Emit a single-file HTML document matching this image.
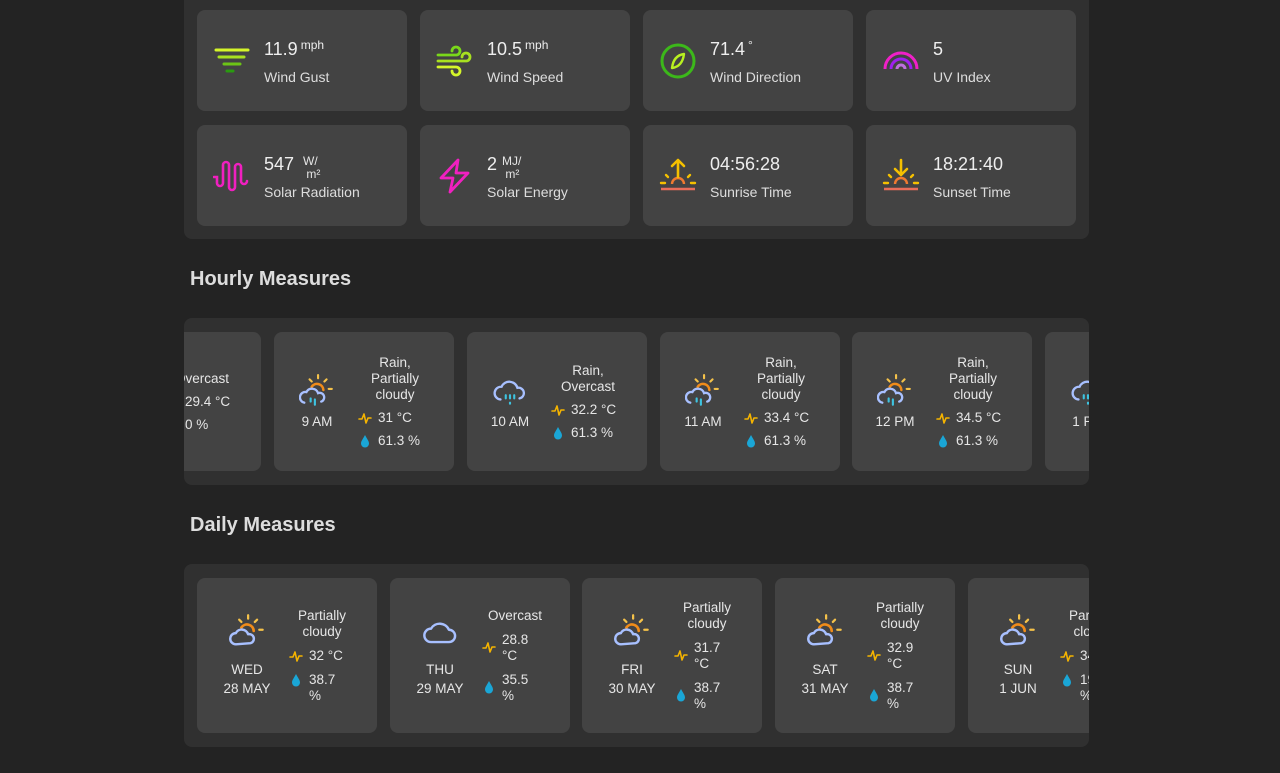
<!DOCTYPE html>
<html><head><meta charset="utf-8"><style>
*{box-sizing:border-box;margin:0;padding:0}
body{width:1280px;height:773px;background:#232323;font-family:"Liberation Sans",sans-serif;color:#e6e6e6;position:relative;overflow:hidden}
.panel{position:absolute;left:184px;width:905px;background:#303030;border-radius:8px;overflow:hidden}
.card{position:absolute;background:#434343;border-radius:8px}
.tc{width:210px;height:101px}
.tc svg{position:absolute;left:16px;top:32px;width:38px;height:38px}
.tc .v{position:absolute;left:67px;top:29px;font-size:18px;color:#eee}
.tc .v sup{font-size:12px;vertical-align:top;position:relative;top:-1px;margin-left:3px}
.tc .l{position:absolute;left:67px;top:59px;font-size:14px;color:#ddd}
.unit2{position:absolute;font-size:12px;line-height:13px}
h2{position:absolute;left:190px;font-size:20px;font-weight:bold;color:#ddd}
.hc{top:14px;width:180px;height:139px;display:flex;align-items:center;font-size:13.5px;line-height:16px}
.lc{width:86px;display:flex;flex-direction:column;align-items:center;flex:none}
.lc svg{width:36px;height:36px;margin-bottom:5px}
.rc{width:82px;margin-left:-6px;text-align:center;flex:none}
.row{display:flex;align-items:flex-start;text-align:left;margin-top:7px;padding-left:4px}
.row svg{width:14px;height:14px;margin-right:6px;margin-top:1px;flex:none}
.dc{top:14px;width:180px;height:155px;display:flex;align-items:center;font-size:13.5px;line-height:16px}
.dc .lc{width:100px}
.dc .lc svg{margin-bottom:9px;width:38px;height:38px}
.dc .lc div{line-height:19px}
.dc .rc{width:66px;margin-left:-8px}
.dc .row{padding-left:0;margin-top:8px}
.dc .row span{width:40px}
</style></head><body>
<svg width="0" height="0" style="position:absolute">
<defs>
<symbol id="pc" viewBox="0 0 34 34">
<g stroke="#f5c24a" stroke-width="2" stroke-linecap="round" fill="none">
<line x1="18" y1="2" x2="18" y2="5"/><line x1="10" y1="6" x2="12" y2="8"/><line x1="26" y1="6" x2="24" y2="8"/><line x1="28" y1="15" x2="31" y2="15"/></g>
<path d="M12 13a6 6 0 0 1 11 3" stroke="#f08c1a" stroke-width="2.4" fill="none" stroke-linecap="round"/>
<path d="M7 28a5 5 0 0 1 0-10a6 6 0 0 1 11 1a4 4 0 0 1 2 8z" stroke="#a8c0ff" stroke-width="2.2" fill="none" stroke-linejoin="round"/>
</symbol>
<symbol id="pcr" viewBox="0 0 34 34">
<g stroke="#f5c24a" stroke-width="2" stroke-linecap="round" fill="none">
<line x1="18" y1="2" x2="18" y2="5"/><line x1="10" y1="6" x2="12" y2="8"/><line x1="26" y1="6" x2="24" y2="8"/><line x1="28" y1="15" x2="31" y2="15"/></g>
<path d="M12 13a6 6 0 0 1 11 3" stroke="#f08c1a" stroke-width="2.4" fill="none" stroke-linecap="round"/>
<path d="M5 28a5 5 0 0 1 2-10a6 6 0 0 1 11 1a4 4 0 0 1 3 8" stroke="#a8c0ff" stroke-width="2.2" fill="none" stroke-linecap="round"/>
<g stroke="#3ec3e0" stroke-width="2" stroke-linecap="round"><line x1="11" y1="24" x2="11" y2="27"/><line x1="15" y1="25" x2="15" y2="30"/></g>
</symbol>
<symbol id="rc" viewBox="0 0 34 34">
<path d="M8 25a6 6 0 0 1 1-12a8 8 0 0 1 15 1a5 5 0 0 1 2 10" stroke="#a8c0ff" stroke-width="2.2" fill="none" stroke-linecap="round"/>
<g stroke="#3ec3e0" stroke-width="2" stroke-linecap="round"><line x1="13" y1="21" x2="13" y2="24"/><line x1="17" y1="21" x2="17" y2="24"/><line x1="21" y1="21" x2="21" y2="24"/><line x1="17" y1="28" x2="17" y2="29"/></g>
</symbol>
<symbol id="oc" viewBox="0 0 34 34">
<path d="M9 26a6 6 0 0 1 0-12a9 9 0 0 1 16 1a5.5 5.5 0 0 1 0 11z" stroke="#a8c0ff" stroke-width="2.2" fill="none" stroke-linejoin="round"/>
</symbol>
<symbol id="tp" viewBox="0 0 14 14"><path d="M1 8h3l2-5 2 9 2-5h3" stroke="#f5b400" stroke-width="1.6" fill="none" stroke-linejoin="round" stroke-linecap="round"/></symbol>
<symbol id="dr" viewBox="0 0 14 14"><path d="M7 1C5 5 3 7 3 9.5a4 4 0 0 0 8 0C11 7 9 5 7 1z" fill="#1aa6d6"/></symbol>
<symbol id="sun" viewBox="0 0 38 38">
<g stroke="#f5c000" stroke-width="2.4" stroke-linecap="round" fill="none"><line x1="2" y1="26" x2="6" y2="26"/><line x1="32" y1="26" x2="36" y2="26"/><line x1="7" y1="18" x2="9" y2="20"/><line x1="31" y1="18" x2="29" y2="20"/></g>
<path d="M13 27a6 6 0 0 1 12 0" stroke="#f07a30" stroke-width="2.4" fill="none"/>
<line x1="2" y1="32" x2="36" y2="32" stroke="#e86d5a" stroke-width="2.4"/>
</symbol>
</defs></svg>

<div class="panel" style="top:-10px;height:249px">
<div class="card tc" style="left:13px;top:20px"><svg viewBox="0 0 38 38"><g stroke-linecap="round" stroke-width="3"><line x1="3" y1="8" x2="35" y2="8" stroke="#d4f52a"/><line x1="6" y1="15" x2="31" y2="15" stroke="#a8e020"/><line x1="11" y1="22" x2="27" y2="22" stroke="#6cc416"/><line x1="14" y1="29" x2="20" y2="29" stroke="#2a9a10"/></g></svg><div class="v">11.9<sup>mph</sup></div><div class="l">Wind Gust</div></div>
<div class="card tc" style="left:236px;top:20px"><svg viewBox="0 0 38 38"><g fill="none" stroke-width="2.8" stroke-linecap="round"><path d="M2 13h18a4 4 0 1 0-4-4" stroke="#7ad81a"/><path d="M2 19h28a4 4 0 1 0-4-4" stroke="#a8e020"/><path d="M2 25h18a4 4 0 1 1-4 4" stroke="#d4f52a"/></g></svg><div class="v">10.5<sup>mph</sup></div><div class="l">Wind Speed</div></div>
<div class="card tc" style="left:459px;top:20px"><svg viewBox="0 0 38 38"><circle cx="19" cy="19" r="16" stroke="#3cb81a" stroke-width="3" fill="none"/><path d="M25 12 C24 20 20 25 13 26 C14 18 18 13 25 12z" stroke="#b8f020" stroke-width="2.4" fill="none" stroke-linejoin="round"/></svg><div class="v">71.4<sup>°</sup></div><div class="l">Wind Direction</div></div>
<div class="card tc" style="left:682px;top:20px"><svg viewBox="0 0 38 38"><g fill="none" stroke-width="3"><path d="M3 27a16 16 0 0 1 32 0" stroke="#f020c8"/><path d="M9 27a10 10 0 0 1 20 0" stroke="#a020f0"/><path d="M15 27a4 4 0 0 1 8 0" stroke="#c070e0"/></g></svg><div class="v">5</div><div class="l">UV Index</div></div>
<div class="card tc" style="left:13px;top:135px"><svg viewBox="0 0 38 38"><path d="M1 20h3v6a3 3 0 0 0 6 0V8a3 3 0 0 1 6 0v22a3 3 0 0 0 6 0V10a3 3 0 0 1 6 0v14a3 3 0 0 0 6 0" stroke="#f020c0" stroke-width="2.6" fill="none" stroke-linecap="round"/></svg><div class="v">547</div><div class="unit2" style="left:106px;top:30px">W/<br>&nbsp;m²</div><div class="l">Solar Radiation</div></div>
<div class="card tc" style="left:236px;top:135px"><svg viewBox="0 0 38 38"><path d="M22 3L5 21h12l-3 14 18-19H20z" stroke="#f020c0" stroke-width="2.8" fill="none" stroke-linejoin="round"/></svg><div class="v">2</div><div class="unit2" style="left:82px;top:30px">MJ/<br>&nbsp;m²</div><div class="l">Solar Energy</div></div>
<div class="card tc" style="left:459px;top:135px"><svg viewBox="0 0 38 38"><use href="#sun"/><path d="M19 20V3M13 9l6-6 6 6" stroke="#f5c000" stroke-width="2.6" fill="none" stroke-linecap="round" stroke-linejoin="round"/></svg><div class="v">04:56:28</div><div class="l">Sunrise Time</div></div>
<div class="card tc" style="left:682px;top:135px"><svg viewBox="0 0 38 38"><use href="#sun"/><path d="M19 3v15M13 12l6 6 6-6" stroke="#f5c000" stroke-width="2.6" fill="none" stroke-linecap="round" stroke-linejoin="round"/></svg><div class="v">18:21:40</div><div class="l">Sunset Time</div></div>
</div>

<h2 style="top:268px">Hourly Measures</h2>
<div class="panel" style="top:318px;height:167px">
<div class="card hc" style="left:-103px"><div class="lc"><svg><use href="#rc"/></svg><div>8 AM</div></div><div class="rc"><div>Overcast</div><div class="row"><svg><use href="#tp"/></svg><span>29.4 °C</span></div><div class="row"><svg><use href="#dr"/></svg><span>0 %</span></div></div></div>
<div class="card hc" style="left:90px"><div class="lc"><svg><use href="#pcr"/></svg><div>9 AM</div></div><div class="rc"><div>Rain,<br>Partially<br>cloudy</div><div class="row"><svg><use href="#tp"/></svg><span>31 °C</span></div><div class="row"><svg><use href="#dr"/></svg><span>61.3 %</span></div></div></div>
<div class="card hc" style="left:283px"><div class="lc"><svg><use href="#rc"/></svg><div>10 AM</div></div><div class="rc"><div>Rain,<br>Overcast</div><div class="row"><svg><use href="#tp"/></svg><span>32.2 °C</span></div><div class="row"><svg><use href="#dr"/></svg><span>61.3 %</span></div></div></div>
<div class="card hc" style="left:476px"><div class="lc"><svg><use href="#pcr"/></svg><div>11 AM</div></div><div class="rc"><div>Rain,<br>Partially<br>cloudy</div><div class="row"><svg><use href="#tp"/></svg><span>33.4 °C</span></div><div class="row"><svg><use href="#dr"/></svg><span>61.3 %</span></div></div></div>
<div class="card hc" style="left:668px"><div class="lc"><svg><use href="#pcr"/></svg><div>12 PM</div></div><div class="rc"><div>Rain,<br>Partially<br>cloudy</div><div class="row"><svg><use href="#tp"/></svg><span>34.5 °C</span></div><div class="row"><svg><use href="#dr"/></svg><span>61.3 %</span></div></div></div>
<div class="card hc" style="left:861px"><div class="lc"><svg><use href="#rc"/></svg><div>1 PM</div></div><div class="rc"><div>Rain,<br>Overcast</div></div></div>
</div>

<h2 style="top:514px">Daily Measures</h2>
<div class="panel" style="top:564px;height:183px">
<div class="card dc" style="left:13px"><div class="lc"><svg><use href="#pc"/></svg><div>WED</div><div>28 MAY</div></div><div class="rc"><div>Partially<br>cloudy</div><div class="row"><svg><use href="#tp"/></svg><span>32 °C</span></div><div class="row"><svg><use href="#dr"/></svg><span>38.7 %</span></div></div></div>
<div class="card dc" style="left:206px"><div class="lc"><svg><use href="#oc"/></svg><div>THU</div><div>29 MAY</div></div><div class="rc"><div>Overcast</div><div class="row"><svg style="margin-top:8px"><use href="#tp"/></svg><span>28.8 °C</span></div><div class="row"><svg style="margin-top:8px"><use href="#dr"/></svg><span>35.5 %</span></div></div></div>
<div class="card dc" style="left:398px"><div class="lc"><svg><use href="#pc"/></svg><div>FRI</div><div>30 MAY</div></div><div class="rc"><div>Partially<br>cloudy</div><div class="row"><svg style="margin-top:8px"><use href="#tp"/></svg><span>31.7 °C</span></div><div class="row"><svg style="margin-top:8px"><use href="#dr"/></svg><span>38.7 %</span></div></div></div>
<div class="card dc" style="left:591px"><div class="lc"><svg><use href="#pc"/></svg><div>SAT</div><div>31 MAY</div></div><div class="rc"><div>Partially<br>cloudy</div><div class="row"><svg style="margin-top:8px"><use href="#tp"/></svg><span>32.9 °C</span></div><div class="row"><svg style="margin-top:8px"><use href="#dr"/></svg><span>38.7 %</span></div></div></div>
<div class="card dc" style="left:784px"><div class="lc"><svg><use href="#pc"/></svg><div>SUN</div><div>1 JUN</div></div><div class="rc"><div>Partially<br>cloudy</div><div class="row"><svg><use href="#tp"/></svg><span>34 °C</span></div><div class="row"><svg><use href="#dr"/></svg><span>19.5 %</span></div></div></div>
</div>
</body></html>
